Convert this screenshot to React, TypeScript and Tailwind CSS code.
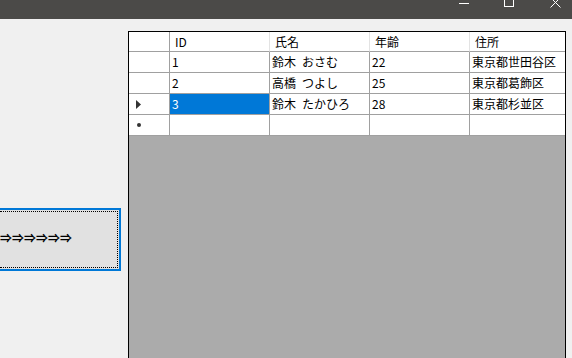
import React from "react";

type Row = { id: string; name: string; age: string; address: string };

const rows: Row[] = [
  { id: "1", name: "鈴木\u2002おさむ", age: "22", address: "東京都世田谷区" },
  { id: "2", name: "高橋\u2002つよし", age: "25", address: "東京都葛飾区" },
  { id: "3", name: "鈴木\u2002たかひろ", age: "28", address: "東京都杉並区" },
];

const font = { fontFamily: '"Noto Sans CJK JP", "Liberation Sans", sans-serif' };

export default function App() {
  const cell = "h-[21px] border-r border-b border-[#a0a0a0] bg-white flex items-center overflow-hidden whitespace-nowrap";

  return (
    <div className="w-[572px] h-[358px] overflow-hidden bg-[#f0f0f0] text-[12px] text-black" style={font}>
      {/* Title bar */}
      <div className="h-[19px] bg-[#4b4a48] flex items-start pl-[459px]">
        <svg width="10" height="10" className="mt-[-3px]" viewBox="0 0 10 10">
          <line x1="0" y1="6.5" x2="10" y2="6.5" stroke="#fff" strokeWidth="1" />
        </svg>
        <svg width="10" height="10" className="mt-[-3px] ml-[35px]" viewBox="0 0 10 10">
          <rect x="0.5" y="0.5" width="9" height="9" fill="none" stroke="#fff" strokeWidth="1" />
        </svg>
        <svg width="11" height="11" className="mt-[-3px] ml-[36px]" viewBox="0 0 11 11">
          <path d="M0.5 0.5 L10.5 10.5 M10.5 0.5 L0.5 10.5" stroke="#fff" strokeWidth="1" />
        </svg>
      </div>

      <div className="flex">
        {/* Left side with button */}
        <div className="w-[128px] shrink-0 pt-[189px]">
          <button className="w-[121px] h-[63px] bg-[#e1e1e1] border-2 border-[#0078d7] border-l-0 p-[1px] pl-0 flex">
            <div className="flex-1 border border-dotted border-black border-l-0 flex items-center pb-[3px] overflow-hidden whitespace-nowrap text-[12px] font-bold">
              ⇒⇒⇒⇒⇒⇒
            </div>
          </button>
        </div>

        {/* DataGridView */}
        <div className="mt-[12px] w-[438px] h-[340px] border border-black bg-[#ababab] overflow-hidden">
          <div className="grid grid-cols-[41px_100px_100px_100px_100px] w-[441px]">
            {/* header */}
            <div className="h-[20px] border-r border-b border-[#a0a0a0] bg-white" />
            {["ID", "氏名", "年齢", "住所"].map((h) => (
              <div
                key={h}
                className="h-[20px] border-b border-[#a0a0a0] border-r border-r-[#e3e3e3] bg-white flex items-center pl-[5px]"
              >
                {h}
              </div>
            ))}

            {rows.map((r, idx) => {
              const current = idx === 2;
              return (
                <React.Fragment key={r.id}>
                  <div className={`${cell} pl-[7px]`}>
                    {current && (
                      <svg width="5" height="9" viewBox="0 0 5 9">
                        <path d="M0 0 L5 4.5 L0 9 Z" fill="#333" />
                      </svg>
                    )}
                  </div>
                  <div className={`${cell} pl-[2px] ${current ? "!bg-[#0078d7] text-white" : ""}`}>{r.id}</div>
                  <div className={`${cell} pl-[2px]`}>{r.name}</div>
                  <div className={`${cell} pl-[2px]`}>{r.age}</div>
                  <div className={`${cell} pl-[2px]`}>{r.address}</div>
                </React.Fragment>
              );
            })}

            {/* new row */}
            <div className={`${cell} pl-[8px]`}>
              <span className="block w-[4px] h-[4px] rounded-full bg-[#333]" />
            </div>
            <div className={cell} />
            <div className={cell} />
            <div className={cell} />
            <div className={cell} />
          </div>
        </div>
      </div>
    </div>
  );
}
